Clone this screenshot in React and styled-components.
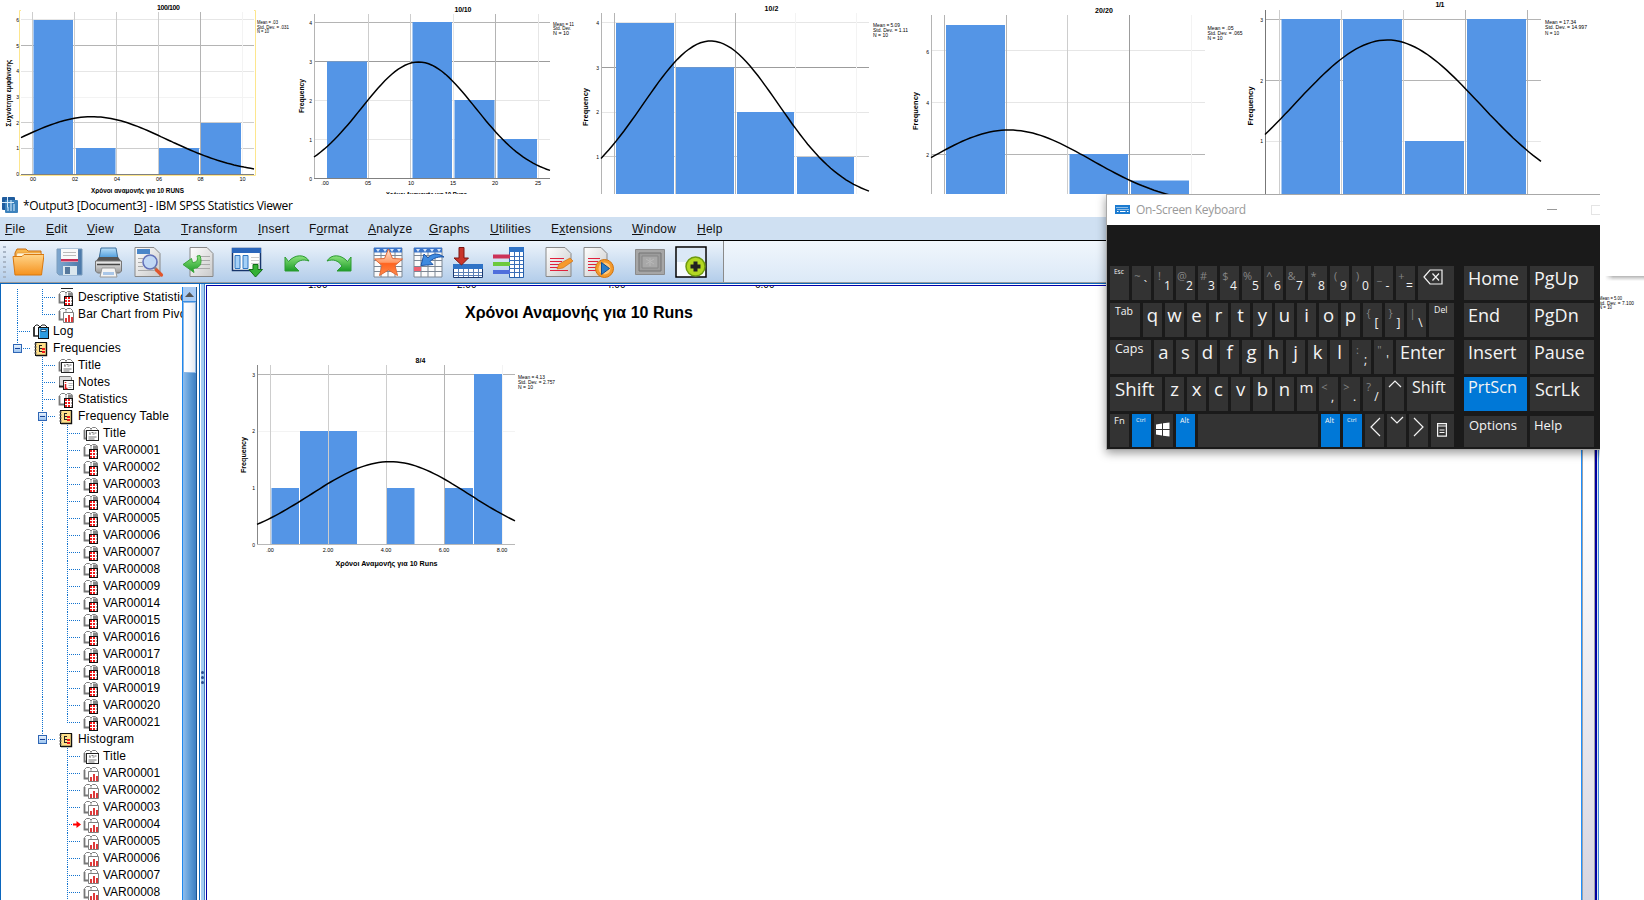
import React from "react";
import styled, { createGlobalStyle, css } from "styled-components";

const Global = createGlobalStyle`
  * { box-sizing: border-box; }
  body { margin: 0; background: #fff; overflow: hidden; }
`;

const UI_FONT = `"Liberation Sans", Arial, sans-serif`;
const WIN_FONT = `"Open Sans", "Noto Sans", sans-serif`;

/* ---------- page ---------- */

const Page = styled.div`
  display: grid;
  grid-template-columns: 1600px 44px;
  width: 1644px;
  height: 900px;
  overflow: hidden;
  background: #fff;
  font-family: ${UI_FONT};
`;

const MainColumn = styled.div`
  display: flex;
  flex-direction: column;
  height: 900px;
`;

const ChartStrip = styled.div`
  display: flex;
  height: 194px;
`;

const SideColumn = styled.div`
  overflow: hidden;
`;

const SidePanel = styled.div`
  height: 276px;
  background: #fff;
`;

const PanelShadow = styled.div`
  height: 5px;
  margin-left: 5px;
  background: linear-gradient(90deg, #fff, transparent 8px), linear-gradient(#b4b4b4, #dcdcdc 50%, #fff);
`;

const SideNote = styled.svg`
  display: block;
  margin-top: 13px;
`;

/* ---------- charts ---------- */

const ChartSvg = styled.svg`
  display: block;
  flex: none;
  margin-left: ${(p) => p.$indent || 0}px;
  overflow: hidden;
  font-family: ${UI_FONT};
`;

function bell({ mu, sd, peak, zero, from, to }) {
  const pts = [];
  for (let i = 0; i <= 70; i++) {
    const x = from + ((to - from) * i) / 70;
    const y = zero - (zero - peak) * Math.exp(-((x - mu) ** 2) / (2 * sd * sd));
    pts.push(`${x.toFixed(1)},${y.toFixed(1)}`);
  }
  return pts.join(" ");
}

function Histogram({ view, indent, d }) {
  const [, , w, h] = view;
  return (
    <ChartSvg $indent={indent} width={w} height={h} viewBox={view.join(" ")}>
      {d.h.map(([gy, c]) => (
        <line key={gy} x1={d.from} x2={d.to} y1={gy} y2={gy} stroke={c} />
      ))}
      {d.v.map(([gx, c]) => (
        <line key={gx} x1={gx} x2={gx} y1={d.top} y2={d.zero} stroke={c} />
      ))}
      {d.bars.map(([a, b, t]) => (
        <rect key={a} x={a} y={t} width={b - a} height={d.zero - t} fill="#5495e6" />
      ))}
      {d.base && <line x1={d.from} x2={d.to} y1={d.zero} y2={d.zero} stroke={d.base} />}
      {d.frame && (
        <path
          d={`M${d.from} 10.5H${d.from - 1.5}V175.5H${d.to + 1.5}V10.5H${d.to}`}
          fill="none"
          stroke="#fde68e"
        />
      )}
      <polyline points={bell(d)} fill="none" stroke="#000" strokeWidth="1.5" />
      <text x={d.title[1]} y={d.title[2]} textLength={d.title[3]} fontSize="7" fontWeight="bold" textAnchor="middle">
        {d.title[0]}
      </text>
      <text
        transform={`translate(${d.yl[1] + 2.5} ${d.yl[2]}) rotate(-90)`}
        fontSize="8"
        fontWeight="bold"
        textLength={d.yl[3]}
        lengthAdjust="spacingAndGlyphs"
        textAnchor="middle"
      >
        {d.yl[0]}
      </text>
      {d.yt.map(([t, ty]) => (
        <text key={ty} x={d.ytx} y={ty + 2} fontSize="5" textAnchor="end">{t}</text>
      ))}
      {(d.xt || []).map(([t, tx]) => (
        <text key={tx} x={tx} y={d.xty} fontSize="5.5" textAnchor="middle">{t}</text>
      ))}
      {d.xl && (
        <text x={d.xl[1]} y={d.xl[2]} fontSize="7" fontWeight="bold" textLength={d.xl[3]} lengthAdjust="spacingAndGlyphs">
          {d.xl[0]}
        </text>
      )}
      {d.stats.map(([t, sx, sy, sw]) => (
        <text key={sy} x={sx} y={sy} fontSize="5" textLength={sw} lengthAdjust="spacingAndGlyphs">{t}</text>
      ))}
    </ChartSvg>
  );
}

const G1 = "#b4b4b4", G2 = "#cdcdcd", G3 = "#e6e6e6", G4 = "#f3f3f3", GD = "#9c9c9c";

const CHARTS = [
  {
    view: [0, 0, 293, 194],
    d: {
      from: 21, to: 254, top: 12, zero: 174.5, base: "#808080", frame: true,
      mu: 92, sd: 75, peak: 116.7,
      h: [[19.5, G3], [45.5, G1], [71.5, G3], [97.5, G4], [122.5, G2], [148.5, G2]],
      v: [[32.5, G2], [74.5, G2], [116.5, G2], [158.5, G2], [200.5, G1], [242.5, G4]],
      bars: [[33.5, 73, 20], [76, 115.5, 148], [159, 199, 148], [201, 241, 123]],
      title: ["100/100", 168.5, 9.5, 23],
      yl: ["Συχνότητα εμφάνισης", 8, 93, 67],
      ytx: 19, yt: [["6", 20], ["5", 46], ["4", 71], ["3", 97], ["2", 123], ["1", 148], ["0", 174]],
      xty: 181, xt: [["00", 33], ["02", 75], ["04", 117], ["06", 159], ["08", 200.5], ["10", 242.5]],
      xl: ["Χρόνοι αναμονής για 10 RUNS", 91, 193, 93],
      stats: [["Mean = .03", 257, 24, 21], ["Std. Dev. = .031", 257, 28.5, 32], ["N = 10", 257, 32.5, 12]],
    },
  },
  {
    view: [293, 0, 284, 194],
    d: {
      from: 314, to: 550, top: 14, zero: 178.5, base: "#808080",
      mu: 418.6, sd: 56.9, peak: 62,
      h: [[22.5, G1], [61.5, GD], [100.5, G3], [139.5, G3]],
      v: [[314.5, G1], [368.5, G2], [410.5, G2], [453.5, G3], [495.5, G1], [538.5, G3]],
      bars: [[327, 367, 61.5], [412.5, 452, 22], [454.5, 494.5, 100], [497.5, 537, 139]],
      title: ["10/10", 463, 12, 17],
      yl: ["Frequency", 301, 96, 34],
      ytx: 312, yt: [["4", 23], ["3", 62], ["2", 101], ["1", 140], ["0", 179]],
      xty: 185, xt: [[".00", 325], ["05", 368], ["10", 411], ["15", 453], ["20", 495], ["25", 538]],
      xl: ["Χρόνοι Αναμονής για 10 Runs", 386, 196.5, 81],
      stats: [["Mean = 11", 553, 26, 21], ["Std. Dev.", 553, 30, 18], ["N = 10", 553, 34.5, 16]],
    },
  },
  {
    view: [577, 0, 333, 194],
    d: {
      from: 601, to: 869, top: 13, zero: 201.4,
      mu: 710.7, sd: 67.6, peak: 41,
      h: [[22.5, G3], [67.5, GD], [112.5, G3], [156.5, G2]],
      v: [[601.5, G1], [614.5, G1], [675.5, G2], [735.5, G1], [795.5, G4], [856.5, G4]],
      bars: [[616, 674, 23], [676, 734, 67.3], [737, 794, 112], [797, 854, 157]],
      title: ["10/2", 771.5, 10.7, 14],
      yl: ["Frequency", 585.7, 107, 38],
      ytx: 599, yt: [["4", 23], ["3", 68], ["2", 112], ["1", 157]],
      stats: [["Mean = 5.09", 873, 27, 27], ["Std. Dev. = 1.11", 873, 32, 35], ["N = 10", 873, 37, 15]],
    },
  },
  {
    view: [910, 0, 335, 194],
    d: {
      from: 931, to: 1205, top: 15, zero: 206.3,
      mu: 1009, sd: 82.3, peak: 130,
      h: [[50.5, G3], [102.5, G3], [154.5, G1]],
      v: [[931.5, G1], [944.5, G1], [1006.5, G1], [1067.5, G2], [1129.5, GD], [1191.5, G4]],
      bars: [[946, 1005, 25], [1069.5, 1128, 154], [1131, 1189, 180.5]],
      title: ["20/20", 1104, 12.7, 18],
      yl: ["Frequency", 915, 111, 38],
      ytx: 929, yt: [["6", 52], ["4", 103], ["2", 155]],
      stats: [["Mean = .05", 1207.5, 30, 26], ["Std. Dev. = .065", 1207.5, 35, 35], ["N = 10", 1207.5, 40, 15]],
    },
  },
  {
    view: [1245, 0, 355, 194],
    d: {
      from: 1265, to: 1541, top: 10, zero: 202,
      mu: 1387.3, sd: 92.4, peak: 40,
      h: [[19.5, G1], [80.5, G1], [141.5, G3]],
      v: [[1265.5, "#777"], [1279.5, G2], [1341.5, G2], [1403.5, G2], [1465.5, G1], [1527.5, G1]],
      bars: [[1281.5, 1340, 19], [1343, 1402, 19], [1405, 1464, 141], [1467, 1526, 19]],
      title: ["1/1", 1440, 6.7, 9],
      yl: ["Frequency", 1250, 106, 39],
      ytx: 1263, yt: [["3", 20], ["2", 81], ["1", 141]],
      stats: [["Mean = 17.34", 1545, 24, 31], ["Std. Dev. = 14.997", 1545, 29, 42], ["N = 10", 1545, 34.5, 14]],
    },
  },
];

const OUTPUT_CHART = {
  view: [235, 350, 335, 225],
  d: {
    from: 257, to: 515, top: 365, zero: 544.5, base: "#b8b8b8",
    mu: 390, sd: 79, peak: 461.7,
    h: [[374.5, G1], [431.5, G4]],
    v: [[257.5, "#888"], [270.5, G2], [328.5, G2], [386.5, G2], [444.5, G1], [502.5, G4]],
    bars: [[271.5, 299, 488], [300, 328, 431], [329, 357, 431], [387, 414.5, 488], [445, 473, 488], [474, 502, 374]],
    title: ["8/4", 420.5, 363.3, 10],
    yl: ["Frequency", 243, 455, 36],
    ytx: 255, yt: [["3", 375], ["2", 431], ["1", 488], ["0", 545]],
    xty: 552, xt: [[".00", 270], ["2.00", 328], ["4.00", 386], ["6.00", 444], ["8.00", 502]],
    xl: ["Χρόνοι Αναμονής για 10 Runs", 335.5, 565.5, 102],
    stats: [["Mean = 4.13", 518, 379, 27], ["Std. Dev. = 2.757", 518, 384, 37], ["N = 10", 518, 388.5, 15]],
  },
};

/* ---------- viewer window ---------- */

const Viewer = styled.section`
  position: relative;
  display: flex;
  flex-direction: column;
  height: 706px;
  overflow: hidden;
  background: #fff;
`;

const TitleBar = styled.div`
  display: flex;
  align-items: center;
  gap: 5px;
  height: 23px;
  padding: 0 0 1px 2px;
  font: 12px ${WIN_FONT};
  letter-spacing: -0.32px;
  color: #000;
  white-space: nowrap;
`;

const MenuBar = styled.nav`
  display: flex;
  height: 24px;
  padding-left: 5px;
  background: #cfe0f2;
  border-bottom: 1px solid #000;
  font: 12px/25px ${UI_FONT};
  letter-spacing: 0.25px;
  color: #111;
`;

const MenuItem = styled.span`
  flex: none;
  width: ${(p) => p.$w}px;
`;

const Toolbar = styled.div`
  display: flex;
  flex: none;
  height: 42px;
  background: linear-gradient(#f0f6fc, #dce9f7);
  border-bottom: 1px solid #9a9a9a;
`;

const ToolGroup = styled.div`
  display: flex;
  align-items: flex-start;
  width: 724px;
  padding: 5px 0 0 3px;
  background: linear-gradient(#edf4fb 0%, #d5e4f4 40%, #b3cdea 100%);
  border-right: 1px solid #8a8a8a;
`;

const Grip = styled.div`
  width: 3px;
  height: 34px;
  background: repeating-linear-gradient(#a9b6c6 0 2px, transparent 2px 5px);
`;

const Tool = styled.svg`
  display: block;
  flex: none;
  width: 32px;
  height: 32px;
  margin-left: ${(p) => p.$gap}px;
`;

const Body = styled.div`
  display: grid;
  grid-template-columns: 200px 5px 1fr;
  height: 617px;
  border-top: 1px solid #0b66bd;
`;

const TreePane = styled.div`
  display: grid;
  grid-template-columns: 181px 15px;
  border-left: 1px solid #0b66bd;
  border-right: 1px solid #0b66bd;
  padding: 3px 2px 0 0;
  overflow: hidden;
`;

const Tree = styled.div`
  overflow: hidden;
  height: 613px;
  padding: 0 0 0 4px;
`;

const ClippedIcon = styled.div`
  width: 12px;
  height: 2px;
  margin-left: 56px;
  border-bottom: 1px solid #222;
`;

const TreeRow = styled.div`
  display: flex;
  align-items: center;
  height: 17px;
  font-size: 12px;
  line-height: 17px;
  color: #000;
  white-space: nowrap;
`;

const dotsV = "repeating-linear-gradient(#1273cf 0 1px, transparent 1px 2px)";
const dotsH = "repeating-linear-gradient(90deg, #1273cf 0 1px, transparent 1px 2px)";

const Rail = styled.span`
  flex: none;
  width: 25px;
  height: 17px;
  ${(p) => p.$on && css`background: ${dotsV} 12px 0 / 1px 100% no-repeat;`}
`;

const Joint = styled.span`
  display: flex;
  align-items: center;
  flex: none;
  width: 27px;
  height: 17px;
  margin-right: 1px;
  padding-left: ${(p) => (p.$arrow ? 18 : 8)}px;
  background: ${dotsV} 12px 0 / 1px ${(p) => (p.$last ? "9px" : "100%")} no-repeat,
    ${dotsH} 12px 8px / 14px 1px no-repeat;
`;

const Toggle = styled.span`
  width: 9px;
  height: 9px;
  border: 1px solid #2f66b5;
  background: linear-gradient(#16449c, #16449c) center / 5px 1px no-repeat, linear-gradient(#e6f1fd, #9cc4ef);
`;

const NodeIcon = styled.svg`
  flex: none;
  width: 16px;
  height: 16px;
  margin-right: 4px;
`;

const NodeLabel = styled.span`
  letter-spacing: ${(p) => (p.$code ? 0 : 0.17)}px;
`;

const ScrollBar = styled.div`
  display: flex;
  flex-direction: column;
  height: 613px;
  border-left: 1px solid #1e88ee;
  border-right: 1px solid #1c5590;
  background: linear-gradient(90deg, #8fbdec, #5b9ad6 55%, #3f7fc2);
`;

const ScrollButton = styled.div`
  display: grid;
  place-items: center;
  height: 15px;
  border-bottom: 1px solid #3a8de0;
  background: #a9ccf5;
`;

const ScrollThumb = styled.div`
  height: 71px;
  border: 1px solid #8fb8e4;
  background: linear-gradient(90deg, #fff, #f6f9fd 50%, #e2e8f0);
`;

const Splitter = styled.div`
  display: grid;
  align-content: start;
  justify-content: center;
  padding-top: 387px;
  gap: 2px;
  border-left: 1px solid #fff;
  border-right: 1px solid #4a7fc0;
  background: #a5cdf3;
`;

const SplitDot = styled.i`
  width: 3px;
  height: 3px;
  border-radius: 50%;
  background: #2b4d92;
`;

const DocFrame = styled.div`
  display: grid;
  grid-template-columns: 1fr 14px 5px;
  margin: 1px 0 0 1px;
  border-left: 1px solid #0000a8;
  border-top: 1px solid #0000a8;
  background: #fff;
  overflow: hidden;
`;

const Doc = styled.div`
  overflow: hidden;
`;

const DocScroll = styled.div`
  border-left: 1px solid #1e90ff;
  border-right: 1px solid #a0a0a8;
  box-shadow: inset 1px 0 #9aa2ac;
  background: linear-gradient(#fff 35%, #d6d5e0);
`;

const DocEdge = styled.div`
  background: linear-gradient(90deg, #0000a0 0 2px, #dce8f5 2px 3px, #3d8ad6 3px 4px, #fff 4px);
`;

const AxisRemnant = styled.div`
  display: flex;
  align-items: flex-end;
  height: 2px;
  overflow: hidden;
  padding-left: 101px;
  font-size: 10px;
  line-height: 7px;
`;

const AxisTick = styled.span`
  width: 149px;
`;

const Heading = styled.h1`
  height: 15px;
  margin: 14px 0 33px 258px;
  font-size: 16px;
  line-height: 22px;
  font-weight: bold;
`;

/* ---------- tree icons ---------- */

const Book = () => (
  <>
    <path d="M1.500 12V3.500l2-2h3L8 3l1.500-1.500h3l2 2V6" fill="#fff" stroke="#808080" />
    <path d="M1.500 4v8.500H7" fill="none" stroke="#777" strokeWidth="1.800" />
    <path d="M8 3v9" stroke="#999" />
  </>
);

const ICONS = {
  table: (
    <>
      <Book />
      <path d="M10 2.500h4.500V7H10z" fill="#888" />
      <rect x="6" y="6" width="9" height="10" fill="#111" />
      <rect x="7" y="7" width="7" height="8" fill="#fff" />
      <path d="M7 7h2v2H7zM10 7h2v2h-2zM7 10h2v2H7zM10 10h2v2h-2zM7 13h2v2H7zM10 13h2v2h-2z" fill="#f01818" />
      <path d="M13 7h1v2h-1zM13 10h1v2h-1zM13 13h1v2h-1z" fill="#b0a0a0" />
    </>
  ),
  chart: (
    <>
      <Book />
      <path d="M5.500 5.500h10v10h-10z" fill="#fff" stroke="#808080" />
      <path d="M7 11h2v4H7zM10 8h2v7h-2zM13 10h2v5h-2z" fill="#dd3a3a" />
    </>
  ),
  title: (
    <>
      <Book />
      <rect x="3.500" y="4.500" width="12" height="10" fill="#fff" stroke="#222" />
      <path d="M6 7h1.500M8.500 6.500h2M11.500 7h2M7 7v2M9.500 8h2M5.500 11h8M5.500 13h6" stroke="#777" fill="none" />
    </>
  ),
  notes: (
    <>
      <path d="M1.500 11V1.500h11l1 1V6" fill="#ddd" stroke="#777" />
      <path d="M1 11.500h5" stroke="#222" strokeWidth="2" />
      <rect x="5.500" y="5.500" width="10" height="9" fill="#fff" stroke="#222" />
      <path d="M7.500 7v1M7.500 9v4M6.500 13.500h3" stroke="#e01818" strokeWidth="1.500" />
      <path d="M10.500 8.500h4M10.500 10.500h4M10.500 12.500h3" stroke="#bbb" />
    </>
  ),
  log: (
    <>
      <path d="M1 12V3l2-2h2l2 2 2-2h3l2 2" fill="#fff" stroke="#222" />
      <path d="M1 3v9h4" fill="none" stroke="#222" strokeWidth="1.600" />
      <rect x="5.500" y="3.500" width="10" height="11" fill="#2d9be0" stroke="#111" />
      <path d="M8 5.500h5v2H8z" fill="#dff1ff" stroke="#0a3c66" strokeWidth=".8" />
      <path d="M6.500 4v10" stroke="#8fd0fa" />
    </>
  ),
  group: (
    <>
      <rect x="2.500" y="1.500" width="11" height="13" fill="#ffe08a" stroke="#111" />
      <path d="M13.500 1.500v13H3" fill="none" stroke="#111" strokeWidth="1.400" />
      <path d="M1 3h3M1 6h3M1 9h3M1 12h3" stroke="#777" />
      <path d="M6 4.500h3M6 7.500h3M6 10.500h3M6.500 4v7" stroke="#222" fill="none" />
      <path d="M9 8h3M9 11h3" stroke="#ee1a1a" strokeWidth="2" />
    </>
  ),
};

const vars = (nums, icon, rail, extra = {}) =>
  nums.map((n, i) => ({
    label: `VAR${String(n).padStart(5, "0")}`,
    icon,
    rails: [0, rail],
    last: extra.close && i === nums.length - 1,
    arrow: extra.arrow === n,
  }));

const ROWS = [
  { label: "Descriptive Statistics", icon: "table", rails: [1] },
  { label: "Bar Chart from Pivot Table", icon: "chart", rails: [1], last: true },
  { label: "Log", icon: "log", rails: [] },
  { label: "Frequencies", icon: "group", rails: [], last: true, toggle: true },
  { label: "Title", icon: "title", rails: [0] },
  { label: "Notes", icon: "notes", rails: [0] },
  { label: "Statistics", icon: "table", rails: [0] },
  { label: "Frequency Table", icon: "group", rails: [0], toggle: true },
  { label: "Title", icon: "title", rails: [0, 1] },
  ...vars([1, 2, 3, 4, 5, 6, 7, 8, 9, 14, 15, 16, 17, 18, 19, 20, 21], "table", 1, { close: true }),
  { label: "Histogram", icon: "group", rails: [0], last: true, toggle: true },
  { label: "Title", icon: "title", rails: [0, 0] },
  ...vars([1, 2, 3, 4, 5, 6, 7, 8], "chart", 0, { arrow: 4 }),
];

const RedArrow = () => (
  <svg width="8" height="7" viewBox="0 0 8 7">
    <path d="M0 2.500h3.500V0L8 3.500 3.500 7V4.500H0z" fill="#f00" />
  </svg>
);

/* ---------- toolbar icons ---------- */

const HiddenDefs = styled.svg`
  display: block;
  width: 0;
  height: 0;
`;

const Defs = () => (
  <HiddenDefs>
    <defs>
      <linearGradient id="gOrange" x2="0" y2="1"><stop stopColor="#ffd58a" /><stop offset="1" stopColor="#f5921e" /></linearGradient>
      <linearGradient id="gBlue" x2="0" y2="1"><stop stopColor="#b9e0fa" /><stop offset="1" stopColor="#3f93d8" /></linearGradient>
      <linearGradient id="gGray" x2="0" y2="1"><stop stopColor="#eee" /><stop offset="1" stopColor="#999" /></linearGradient>
      <linearGradient id="gGreen" x2="0" y2="1"><stop stopColor="#8be27c" /><stop offset="1" stopColor="#1c9c28" /></linearGradient>
      <linearGradient id="gStar" x2="0" y2="1"><stop stopColor="#ffe9dc" /><stop offset=".5" stopColor="#ff9a66" /><stop offset=".55" stopColor="#ff6420" /><stop offset="1" stopColor="#ff8a4a" /></linearGradient>
      <linearGradient id="gPage" x2="1" y2="1"><stop stopColor="#fff" /><stop offset="1" stopColor="#c9c9c9" /></linearGradient>
      <linearGradient id="gSave" x2="1" y2="0"><stop stopColor="#7fa8d0" /><stop offset="1" stopColor="#4a77a8" /></linearGradient>
    </defs>
  </HiddenDefs>
);

const SheetGrid = () => (
  <>
    <path d="M1 2h28v29H1z" fill="#fbfbfb" />
    <path d="M1 9.500h28M1 14.500h28M1 20.500h28M1 25.500h28M8 2v29M15 2v29M22 2v29M1 2v29h28V2" stroke="#7d8794" fill="none" />
    <path d="M1 1.500h28v5H1z" fill="#3b74c8" />
    <path d="M3 3h4l-2 3zM10 3h4l-2 3zM17 3h4l-2 3zM24 3h4l-2 3z" fill="#d8e8fa" />
  </>
);

const Paper = ({ w = 24 }) => (
  <path d={`M2 1.500h${w - 7}l6 6V30.500H2z`} fill="url(#gPage)" stroke="#888" />
);

/* each entry: gap to the previous icon, artwork on a 32px canvas */
const TOOLS = [
  [6, <><path d="M3 7l2-4h9l2 2h13v8H3z" fill="#f8b64c" stroke="#c96d10" /><path d="M5 7h24l-1 5H4z" fill="#fff5d8" stroke="#e09030" strokeWidth=".6" /><path d="M1 10.500h9l2-2h20l-2.500 20.500H3z" fill="url(#gOrange)" stroke="#d9780f" /></>],
  [11, <><path d="M2 3h25v26H4l-2-2z" fill="url(#gSave)" stroke="#7b9cbc" /><path d="M6 3h17v13H6z" fill="#fafafa" /><path d="M8 6.500h13M8 9.500h13" stroke="#bbb" /><path d="M6 13h17v2.500H6z" fill="#c83058" /><path d="M8 20h14v9H8z" fill="#dbe7ee" /><path d="M10 21h5v7h-5z" fill="#56789c" /></>],
  [7, <><path d="M7 2h15l2 11H5z" fill="url(#gBlue)" stroke="#3a6e9c" /><path d="M5 11h19l3 4H2z" fill="#555" /><path d="M1.500 15h26v10l-2 2h-22l-2-2z" fill="url(#gGray)" stroke="#777" /><path d="M3 18.500h23" stroke="#444" strokeWidth="1.500" /><path d="M8 22h13l2 9H6z" fill="#f4f4f4" stroke="#999" /><path d="M9 26h11v3H9z" fill="#a9c6e8" /></>],
  [7, <><Paper w={26} /><path d="M4 3h13v5H4z" fill="#4a86c8" /><path d="M5 12.500h5M5 16.500h4M5 20.500h5M5 24.500h18M13 10.500h9" stroke="#aaa" /><circle cx="17" cy="16" r="7" fill="#bcd6f7" fillOpacity=".9" stroke="#6271b8" strokeWidth="1.600" /><path d="M21.500 21.500l2 2" stroke="#888" strokeWidth="3" /><path d="M23.500 24l5 5" stroke="#e0562c" strokeWidth="3.200" strokeLinecap="round" /></>],
  [17, <><path d="M8 1.500h17l6 6V30.500H8z" fill="url(#gPage)" stroke="#888" /><path d="M18 10.500h10M18 14.500h10M18 18.500h10M14 22.500h14" stroke="#aaa" /><path d="M18 9.500c3 9-1 13-7 13l1 4L1 18.500l8.500-6 1 4c4 0 6-2 4.500-6.500z" fill="url(#gGreen)" stroke="#3aa53a" /></>],
  [17, <><path d="M1.500 2.500h28v22h-28z" fill="#fdfdfd" stroke="#17356b" strokeWidth="1.500" /><path d="M1 2h29v5H1z" fill="#2a66bb" /><path d="M4 9.500h5v13H4zM12 9.500h5v13h-5z" fill="#a5d0f7" stroke="#2f76c0" /><path d="M20 11.500h8M20 14.500h8M20 17.500h8" stroke="#ccc" /><path d="M22 18.500h5v5h4.500L24.500 31 18 23.500h4z" fill="#35b135" stroke="#126f18" /></>],
  [19, <path d="M3 11v14h14l-5-5c4-6 9-7 15-5-4-7-14-7-20.500 .500z" fill="url(#gGreen)" stroke="#2c9b33" />],
  [9, <path d="M28 11v14H14l5-5c-4-6-9-7-15-5 4-7 14-7 20.500 .500z" fill="url(#gGreen)" stroke="#2c9b33" />],
  [18, <><SheetGrid /><path d="M15.500 3l4 9.500 10 .500-7.500 6.500 2.500 10-9-5.500-9 5.500 2.500-10L1.500 13l10-.5z" fill="url(#gStar)" stroke="#e06a38" /></>],
  [8, <><SheetGrid /><path d="M1 21h7v4H1z" fill="#f06070" /><path d="M31 11C24 6 18 8 15 12l-4-4-3 11.500 12-1-3-3c4-4 9-5 14-4.500z" fill="#3f8be0" stroke="#1d55a8" /></>],
  [7, <><path d="M1.500 18.500h29v13h-29z" fill="#fff" stroke="#1c3a70" /><path d="M1 18h30v5H1z" fill="#2f73c6" /><path d="M2 26.500h28M2 29.500h28M6.500 23v8M11.500 23v8M16.500 23v8M21.500 23v8M26.500 23v8" stroke="#5b7fb4" /><path d="M7 1.500h5V12h4.500L9.500 19 2 12h5z" fill="#c9352b" stroke="#7c1712" /></>],
  [8, <><path d="M17.500 1.500h14v30h-14z" fill="#fff" stroke="#2660ac" /><path d="M17 1h15v5H17z" fill="#2f73c6" /><path d="M17 10.500h14M17 14.500h14M17 18.500h14M17 22.500h14M17 26.500h14M22.500 6v25M27.500 6v25" stroke="#3a6fb8" /><path d="M1 10.500h17" stroke="#cc3258" strokeWidth="4" /><path d="M1 18h17" stroke="#6cc93c" strokeWidth="4" /><path d="M1 26h17" stroke="#4f6fdc" strokeWidth="4" /></>],
  [20, <><Paper w={26} /><path d="M6 12.500h14M6 15.500h12M6 18.500h10M6 21.500h8M6 24.500h18" stroke="#e0213c" /><path d="M13 23l2-5L26 12l3 3-10 7z" fill="#f79a2a" stroke="#c8660c" strokeWidth=".6" /></>],
  [6, <><Paper /><path d="M6 12.500h12M6 15.500h10M6 18.500h8M6 21.500h8M6 24.500h8" stroke="#e0213c" /><circle cx="22.500" cy="22.500" r="9" fill="#f39a2c" stroke="#d0730f" /><circle cx="22.500" cy="22.500" r="6" fill="#ffc77a" /><path d="M19.500 16.500v12l8-6z" fill="#2a7cc8" stroke="#0f4f94" /></>],
  [20, <><path d="M1.500 3.500h29v25h-29z" fill="#a6a6a6" stroke="#8a8a8a" /><path d="M5 7h22v18H5z" fill="#9c9c9c" stroke="#757575" /><path d="M8 10h16v12H8z" fill="#a8a8a8" stroke="#868686" /><path d="M16 12v8M12 13l8 5M20 13l-8 5" stroke="#b8b8b8" /></>],
  [9, <><path d="M1 1h30v30H1z" fill="#f6fafe" stroke="#000" strokeWidth="1.500" /><path d="M2 2h28v14H2z" fill="#dbe8f6" /><circle cx="20.500" cy="20.500" r="9.500" fill="#b3d822" stroke="#6e9a10" strokeWidth="1.500" /><path d="M18.500 15.500h4v3h3v4h-3v3h-4v-3h-3v-4h3z" fill="#222" /></>],
];

const MENUS = [
  ["File", 0, 41], ["Edit", 0, 41], ["View", 0, 47], ["Data", 0, 47], ["Transform", 0, 77],
  ["Insert", 0, 51], ["Format", 1, 59], ["Analyze", 0, 61], ["Graphs", 0, 61], ["Utilities", 0, 61],
  ["Extensions", 1, 81], ["Window", 0, 65], ["Help", 0, 40],
];

/* ---------- on-screen keyboard ---------- */

const Keyboard = styled.section`
  position: absolute;
  left: 1106px;
  top: 0;
  width: 500px;
  height: 256px;
  border: 1px solid #a8a8a8;
  background: #1a1a1a;
  box-shadow: 0 3px 9px rgba(0, 0, 0, 0.4);
  font-family: ${WIN_FONT};
`;

const KbTitle = styled.header`
  display: flex;
  align-items: center;
  height: 30px;
  padding: 0 0 1px 8px;
  background: #fff;
  color: #999;
  font-size: 12px;
  letter-spacing: -0.3px;
  overflow: hidden;
`;

const KbIcon = styled.svg`
  flex: none;
  width: 15px;
  height: 9px;
`;

const KbName = styled.span`
  flex: none;
  width: 411px;
  margin-left: 6px;
`;

const WinButton = styled.span`
  flex: none;
  width: 10px;
  height: ${(p) => (p.$box ? 10 : 1)}px;
  margin-right: 34px;
  border: 1px solid ${(p) => (p.$box ? "#e4e4e4" : "#999")};
  border-width: ${(p) => (p.$box ? "1px" : "1px 0 0")};
`;

const KbBody = styled.div`
  display: flex;
  gap: 10px;
  padding: 41px 0 0 3px;
`;

const KeyBlock = styled.div`
  display: flex;
  flex-direction: column;
  gap: 3px;
`;

const KeyRow = styled.div`
  display: flex;
  gap: 3px;
  align-items: flex-end;
  height: ${(p) => p.$h || 34}px;
`;

const Key = styled.div`
  flex: none;
  display: flex;
  justify-content: ${(p) => (p.$center ? "center" : "flex-start")};
  width: ${(p) => p.$w || 19}px;
  height: ${(p) => p.$h || "100%"};
  padding-left: ${(p) => (p.$center ? 0 : p.$pad ?? 5)}px;
  background: ${(p) => (p.$on ? "#0078d7" : "#333")};
  color: #f4f4f4;
  overflow: hidden;
`;

const Cap = styled.span`
  font-size: ${(p) => p.$size}px;
  line-height: ${(p) => 2 * (p.$base - 0.388 * p.$size)}px;
  white-space: nowrap;
`;

const Upper = styled.span`
  width: 9px;
  flex: none;
  text-align: center;
  font-size: 11px;
  line-height: 19px;
  color: #858585;
`;

const Lower = styled.span`
  width: 7px;
  flex: none;
  text-align: center;
  font-size: 12px;
  line-height: 40px;
`;

const KeyGlyph = styled.svg`
  flex: none;
  fill: none;
  stroke: #f4f4f4;
  stroke-width: 1.2;
  margin-top: ${(p) => p.$top}px;
`;

const L = ({ c }) => <Key $center><Cap $size={18.5} $base={19}>{c}</Cap></Key>;
const Two = ({ u, l }) => <Key $pad={1}><Upper>{u}</Upper><Lower>{l}</Lower></Key>;
const Word = ({ t, w, size, base, pad, on, h, center }) => (
  <Key $w={w} $pad={pad} $on={on} $h={h} $center={center}><Cap $size={size} $base={base}>{t}</Cap></Key>
);

function OnScreenKeyboard() {
  return (
    <Keyboard>
      <KbTitle>
        <KbIcon viewBox="0 0 15 9">
          <rect width="15" height="9" fill="#1c7bd0" />
          <path d="M1.500 2.500h12M2.500 4.500h11" stroke="#fff" strokeDasharray="1 1" />
          <path d="M2 6.500h1.500M5 6.500h5.500M12 6.500h1.500" stroke="#fff" />
        </KbIcon>
        <KbName>On-Screen Keyboard</KbName>
        <WinButton />
        <WinButton $box />
      </KbTitle>
      <KbBody>
        <KeyBlock>
          <KeyRow>
            <Word t="Esc" size={6.5} base={9} pad={4} />
            {["~`", "!1", "@2", "#3", "$4", "%5", "^6", "&7", "*8", "(9", ")0", "_-", "+="].map((k) => (
              <Two key={k} u={k[0]} l={k[1]} />
            ))}
            <Key $w={36}>
              <KeyGlyph $top={3} width="20" height="16" viewBox="0 0 20 16">
                <path d="M1 8l6-7h12v14H7z M9.500 4.500l6.500 7M16 4.500l-6.500 7" />
              </KeyGlyph>
            </Key>
          </KeyRow>
          <KeyRow>
            <Word t="Tab" w={30} size={10.5} base={12.3} />
            {[..."qwertyuiop"].map((c) => <L key={c} c={c} />)}
            <Two u="{" l="[" /><Two u="}" l="]" /><Two u="|" l="\" />
            <Word t="Del" w={25} size={8.8} base={11} />
          </KeyRow>
          <KeyRow>
            <Word t="Caps" w={41} size={12.5} base={14.3} />
            {[..."asdfghjkl"].map((c) => <L key={c} c={c} />)}
            <Two u=":" l=";" /><Two u={'"'} l="'" />
            <Word t="Enter" w={58} size={18} base={19} pad={4} />
          </KeyRow>
          <KeyRow>
            <Word t="Shift" w={52} size={18.7} base={19} />
            {[..."zxcvbn"].map((c) => <L key={c} c={c} />)}
            <Word t="m" size={15} base={16} center />
            <Two u="<" l="," /><Two u=">" l="." /><Two u="?" l="/" />
            <Key $center>
              <KeyGlyph $top={3} width="14" height="8" viewBox="0 0 14 8"><path d="M1 7l6-6 6 6" /></KeyGlyph>
            </Key>
            <Word t="Shift" w={47} size={16} base={17} />
          </KeyRow>
          <KeyRow $h={33}>
            <Word t="Fn" size={9.5} base={11} pad={4} />
            <Word t="Ctrl" size={5.8} base={8.5} pad={4} on />
            <Key $pad={2}>
              <svg width="14" height="33" viewBox="0 0 14 33">
                <path d="M0 10.500l6-1V15H0zM7 9.300L13.500 8.500V15H7zM0 16h6v5.500l-6-1zM7 16h6.500v6.500L7 21.700z" fill="#fff" />
              </svg>
            </Key>
            <Word t="Alt" size={7.3} base={9} pad={4} on />
            <Key $w={120} />
            <Word t="Alt" size={7.3} base={9} pad={4} on />
            <Word t="Ctrl" size={5.8} base={8.5} pad={4} on />
            <Key $center><KeyGlyph $top={3} width="12" height="20" viewBox="0 0 12 20"><path d="M11 1l-9 9 9 9" /></KeyGlyph></Key>
            <Key $center><KeyGlyph $top={2} width="14" height="8" viewBox="0 0 14 8"><path d="M1 1l6 6 6-6" /></KeyGlyph></Key>
            <Key $center><KeyGlyph $top={3} width="12" height="20" viewBox="0 0 12 20"><path d="M1 1l9 9-9 9" /></KeyGlyph></Key>
            <Key $w={23} $pad={6}>
              <KeyGlyph $top={9} width="10" height="14" viewBox="0 0 10 14">
                <path d="M.6.600h8.800v12.500H.6zM0 3h10M2.500 7h5M2.500 9.500h5" />
              </KeyGlyph>
            </Key>
          </KeyRow>
        </KeyBlock>
        <KeyBlock>
          <KeyRow><Word t="Home" w={63} size={18} base={19} pad={4} /><Word t="PgUp" w={64} size={18} base={19} pad={4} /></KeyRow>
          <KeyRow><Word t="End" w={63} size={18} base={19} pad={4} /><Word t="PgDn" w={64} size={18} base={19} pad={4} /></KeyRow>
          <KeyRow><Word t="Insert" w={63} size={18} base={19} pad={4} /><Word t="Pause" w={64} size={18} base={19} pad={4} /></KeyRow>
          <KeyRow><Word t="PrtScn" w={63} size={16.3} base={17} pad={4} on /><Word t="ScrLk" w={64} size={18} base={19} /></KeyRow>
          <KeyRow $h={33}><Word t="Options" w={63} size={13} base={14.5} h="31px" /><Word t="Help" w={64} size={13} base={14.5} h="31px" pad={4} /></KeyRow>
        </KeyBlock>
      </KbBody>
    </Keyboard>
  );
}

export default function App() {
  return (
    <Page>
      <Global />
      <MainColumn>
        <ChartStrip>
          {CHARTS.map((c) => <Histogram key={c.d.title[0]} {...c} />)}
        </ChartStrip>
        <Viewer>
          <TitleBar>
            <svg width="16" height="16" viewBox="0 0 16 16">
              <rect x="0" y="0" width="13" height="13" rx="1" fill="#1f5c9e" />
              <rect x="3" y="3" width="13" height="13" rx="1" fill="#3c82bd" />
              <path d="M0 5.500h12M5.500 0v11M9 3v5" stroke="#d6ebfa" />
              <path d="M6 14v-4M9 14v-6M12 14V7" stroke="#a6cdea" strokeWidth="1.500" />
            </svg>
            *Output3 [Document3] - IBM SPSS Statistics Viewer
          </TitleBar>
          <MenuBar>
            {MENUS.map(([t, i, w]) => (
              <MenuItem key={t} $w={w}>{t.slice(0, i)}<u>{t[i]}</u>{t.slice(i + 1)}</MenuItem>
            ))}
          </MenuBar>
          <Toolbar>
            <ToolGroup>
              <Grip />
              {TOOLS.map(([gap, art], i) => <Tool key={i} $gap={gap} viewBox="0 0 32 32">{art}</Tool>)}
            </ToolGroup>
          </Toolbar>
          <Body>
            <TreePane>
              <Tree>
                <ClippedIcon />
                {ROWS.map((r, i) => (
                  <TreeRow key={i}>
                    {r.rails.map((on, j) => <Rail key={j} $on={on} />)}
                    <Joint $last={r.last} $arrow={r.arrow}>
                      {r.toggle && <Toggle />}
                      {r.arrow && <RedArrow />}
                    </Joint>
                    <NodeIcon viewBox="0 0 16 16">{ICONS[r.icon]}</NodeIcon>
                    <NodeLabel $code={r.label.startsWith("VAR")}>{r.label}</NodeLabel>
                  </TreeRow>
                ))}
              </Tree>
              <ScrollBar>
                <ScrollButton>
                  <svg width="9" height="5" viewBox="0 0 9 5"><path d="M4.500 0L9 5H0z" fill="#555" /></svg>
                </ScrollButton>
                <ScrollThumb />
              </ScrollBar>
            </TreePane>
            <Splitter><SplitDot /><SplitDot /><SplitDot /></Splitter>
            <DocFrame>
              <Doc>
                <AxisRemnant>
                  <AxisTick>1.00</AxisTick><AxisTick>2.00</AxisTick><AxisTick>4.00</AxisTick><AxisTick>6.00</AxisTick>
                </AxisRemnant>
                <Heading>Χρόνοι Αναμονής για 10 Runs</Heading>
                <Histogram {...OUTPUT_CHART} indent={28} />
              </Doc>
              <DocScroll />
              <DocEdge />
            </DocFrame>
          </Body>
          <OnScreenKeyboard />
        </Viewer>
      </MainColumn>
      <SideColumn>
        <SidePanel />
        <PanelShadow />
        <SideNote width="44" height="20" viewBox="0 0 44 20" fontSize="5">
          <text x="-1" y="6" textLength="23" lengthAdjust="spacingAndGlyphs">Mean = 5.00</text>
          <text x="-3" y="10.500" textLength="37" lengthAdjust="spacingAndGlyphs">Std. Dev. = 7.100</text>
          <text x="-1" y="15" textLength="13" lengthAdjust="spacingAndGlyphs">N = 10</text>
        </SideNote>
      </SideColumn>
      <Defs />
    </Page>
  );
}
